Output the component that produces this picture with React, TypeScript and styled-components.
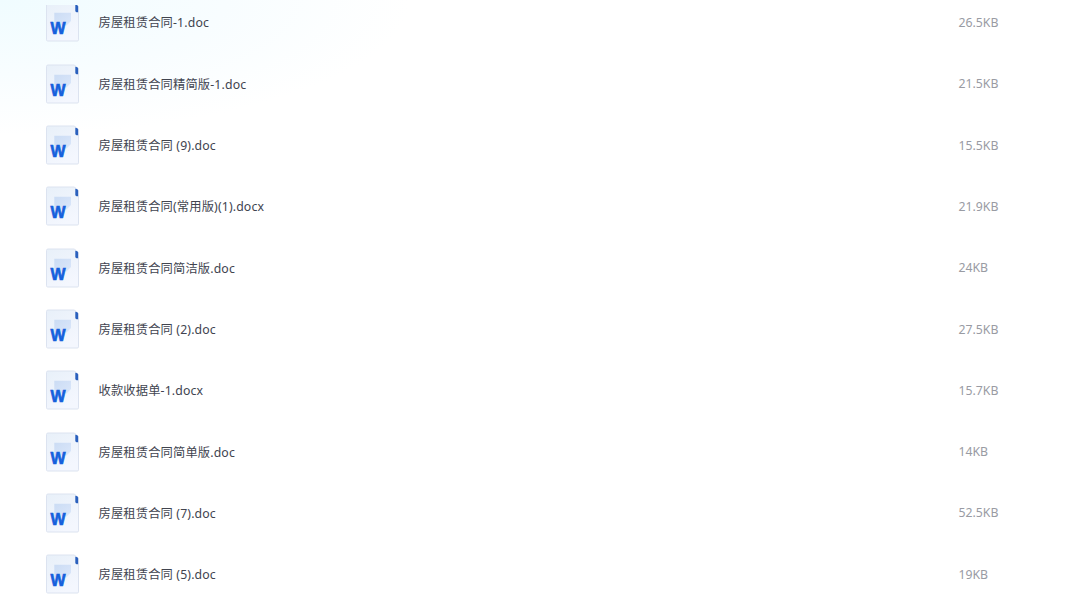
import React from 'react'
import styled, { createGlobalStyle } from 'styled-components'

type FileItem = {
  name: string
  size: string
}

const files: FileItem[] = [
  { name: '房屋租赁合同-1.doc', size: '26.5KB' },
  { name: '房屋租赁合同精简版-1.doc', size: '21.5KB' },
  { name: '房屋租赁合同 (9).doc', size: '15.5KB' },
  { name: '房屋租赁合同(常用版)(1).docx', size: '21.9KB' },
  { name: '房屋租赁合同简洁版.doc', size: '24KB' },
  { name: '房屋租赁合同 (2).doc', size: '27.5KB' },
  { name: '收款收据单-1.docx', size: '15.7KB' },
  { name: '房屋租赁合同简单版.doc', size: '14KB' },
  { name: '房屋租赁合同 (7).doc', size: '52.5KB' },
  { name: '房屋租赁合同 (5).doc', size: '19KB' },
]

function WordIcon() {
  return (
    <Icon viewBox='0 0 34 40' aria-hidden='true'>
      <defs>
        <linearGradient id='paper' x1='0' y1='0' x2='.5' y2='1'>
          <stop offset='0' stopColor='#e8f0f9' />
          <stop offset='1' stopColor='#f4f7fe' />
        </linearGradient>
        <linearGradient id='block' x1='0' y1='0' x2='1' y2='1'>
          <stop offset='0' stopColor='#cbdcf4' />
          <stop offset='1' stopColor='#dbe7fa' />
        </linearGradient>
      </defs>
      <path
        d='M2 1H28.5L32.5 5V37.8Q32.5 39 31.3 39H1.7Q.5 39 .5 37.8V2.5Q.5 1 2 1Z'
        fill='url(#paper)'
        stroke='#dce3f0'
      />
      <path d='M8.3 10.8H25V19L20.5 23.5H8.3Z' fill='url(#block)' />
      <path d='M29.3 2.7Q31.9 2.6 32.1 4.6V10.2H30.6Q29.3 10.2 29.3 8.8Z' fill='#2a60bd' />
      <IconLetter x='4.4' y='32.2' textLength='15' lengthAdjust='spacingAndGlyphs'>
        W
      </IconLetter>
    </Icon>
  )
}

function App() {
  return (
    <>
      <GlobalStyle />
      <Page>
        <Scroller>
          <FileList>
            {files.map((file) => (
              <Row key={file.name}>
                <WordIcon />
                <Name>{file.name}</Name>
                <Size>{file.size}</Size>
              </Row>
            ))}
          </FileList>
        </Scroller>
      </Page>
    </>
  )
}

const GlobalStyle = createGlobalStyle`
  body {
    margin: 0;
    background: #fff;
    overflow: hidden;
  }
`

const Page = styled.div`
  box-sizing: border-box;
  height: 601px;
  padding-top: 5px;
  background: radial-gradient(ellipse 410px 135px at 0 0, #f0fcff 0%, #f8fdff 55%, #fff 100%);
  font-family: 'Noto Sans', 'Noto Sans CJK SC', sans-serif;
  font-size: 12.27px;
`

const Scroller = styled.div`
  height: 100%;
  overflow: hidden;
`

/* the list is scrolled slightly past its first row */
const FileList = styled.ul`
  display: flex;
  flex-direction: column;
  list-style: none;
  margin: -13.3px 0 0;
  padding: 0 0 0 45.5px;
`

const Row = styled.li`
  display: flex;
  align-items: center;
  flex: none;
  height: 61.33px;
`

const Icon = styled.svg`
  flex: none;
  width: 34px;
  height: 40px;
  margin-right: 19px;
`

const IconLetter = styled.text`
  font-family: 'Liberation Sans', sans-serif;
  font-size: 17px;
  font-weight: 700;
  fill: #1560dc;
  stroke: #1560dc;
  stroke-width: 0.7px;
`

const Name = styled.span`
  flex: 1;
  color: #41444f;
  letter-spacing: 0.15px;
  white-space: nowrap;
`

const Size = styled.span`
  width: 121.5px;
  color: #999ba3;
  white-space: nowrap;
`

export default App
